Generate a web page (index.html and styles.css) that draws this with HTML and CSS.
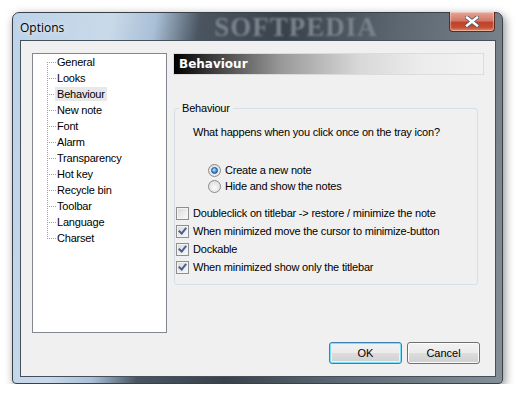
FILE: index.html
```html
<!DOCTYPE html>
<html lang="en">
<head>
    <meta charset="UTF-8">
    <title>Options</title>
    <link rel="stylesheet" href="styles.css">
</head>
<body>
    <div class="window">
        <div class="titlebar">
            <span class="title">Options</span>
            <span class="watermark">SOFTPEDIA</span>
            <button class="close">
                <svg width="14" height="11" viewBox="0 0 14 11">
                    <path d="M2 1.5 L12 9.5 M12 1.5 L2 9.5" stroke="#505a66" stroke-width="4" stroke-linecap="square"/>
                    <path d="M2 1.5 L12 9.5 M12 1.5 L2 9.5" stroke="#fff" stroke-width="2.4" stroke-linecap="square"/>
                </svg>
            </button>
        </div>
        <div class="client">
            <div class="main">
                <ul class="tree">
                    <li class="first">General</li>
                    <li>Looks</li>
                    <li><span class="selected">Behaviour</span></li>
                    <li>New note</li>
                    <li>Font</li>
                    <li>Alarm</li>
                    <li>Transparency</li>
                    <li>Hot key</li>
                    <li>Recycle bin</li>
                    <li>Toolbar</li>
                    <li>Language</li>
                    <li class="last">Charset</li>
                </ul>
                <div class="page">
                    <div class="page-header">Behaviour</div>
                    <fieldset class="group">
                        <legend>Behaviour</legend>
                        <p class="question">What happens when you click once on the tray icon?</p>
                        <div class="radios">
                            <label class="option"><span class="radio checked"></span>Create a new note</label>
                            <label class="option"><span class="radio"></span>Hide and show the notes</label>
                        </div>
                        <div class="checks">
                            <label class="option"><span class="check"></span>Doubleclick on titlebar -&gt; restore / minimize the note</label>
                            <label class="option"><span class="check checked"></span>When minimized move the cursor to minimize-button</label>
                            <label class="option"><span class="check checked"></span>Dockable</label>
                            <label class="option"><span class="check checked"></span>When minimized show only the titlebar</label>
                        </div>
                    </fieldset>
                </div>
            </div>
            <div class="buttons">
                <button class="btn default">OK</button>
                <button class="btn">Cancel</button>
            </div>
        </div>
    </div>
</body>
</html>
```

FILE: styles.css
```css
body {
    margin: 0;
    background-color: #fff;
    font-family: "Liberation Sans", Arial, sans-serif;
    font-size: 11px;
    letter-spacing: -0.2px;
    color: #000;
}
.window {
    margin: 12px 0 0 12px;
    width: 491px;
    height: 372px;
    box-sizing: border-box;
    padding: 0 6px 6px 7px;
    border-radius: 7px 7px 4px 4px;
    border: 1px solid #3a4047;
    background:
        linear-gradient(100deg, #bcd3ea 0%, #c9d9e8 18%, #a8bfd6 26%, #4a5560 34%, #39424b 50%, #5c6771 70%, #848f98 100%);
    box-shadow: 2px 3px 10px rgba(0,0,0,0.45);
    display: flex;
    flex-direction: column;
}
.titlebar {
    height: 27px;
    display: flex;
    align-items: center;
    letter-spacing: 0;
}
.title {
    font-family: "Open Sans", "Liberation Sans", sans-serif;
    font-size: 12px;
    padding-left: 0;
    padding-top: 1px;
    color: #000;
    text-shadow: 0 0 6px rgba(255,255,255,0.9);
}
.watermark {
    margin-left: 150px;
    margin-top: 2px;
    font-family: "Liberation Serif", serif;
    font-weight: bold;
    font-size: 27px;
    letter-spacing: 1px;
    color: #7a838c;
    filter: blur(1.2px);
}
.close {
    margin-left: auto;
    align-self: flex-start;
    width: 46px;
    height: 20px;
    margin-top: -1px;
    margin-right: 1px;
    border: 1px solid #5b2a24;
    border-top: none;
    border-radius: 0 0 4px 4px;
    background: linear-gradient(to bottom, #e6a595 0%, #d47867 45%, #c0432c 55%, #c44c32 80%, #e08866 100%);
    box-shadow: inset 0 0 1px 1px rgba(255,255,255,0.4);
    display: flex;
    align-items: center;
    justify-content: center;
    padding: 0;
}
.client {
    flex: 1;
    background-color: #f0f0f0;
    border: 1px solid #44505b;
    padding: 12px 11px 0 11px;
    display: flex;
    flex-direction: column;
}
.main {
    display: flex;
    gap: 6px;
    height: 280px;
}
.tree {
    list-style: none;
    margin: 0;
    padding: 0;
    width: 135px;
    box-sizing: border-box;
    background-color: #fff;
    border: 1px solid #828790;
}
.tree li {
    height: 16px;
    line-height: 17px;
    padding-left: 24px;
    background:
        repeating-linear-gradient(to bottom, #a0a0a0 0 1px, transparent 1px 2px) 14px 0 / 1px 16px no-repeat,
        repeating-linear-gradient(to right, #a0a0a0 0 1px, transparent 1px 2px) 16px 8px / 8px 1px no-repeat;
}
.tree li.first {
    background:
        repeating-linear-gradient(to bottom, #a0a0a0 0 1px, transparent 1px 2px) 14px 8px / 1px 8px no-repeat,
        repeating-linear-gradient(to right, #a0a0a0 0 1px, transparent 1px 2px) 16px 8px / 8px 1px no-repeat;
}
.tree li.last {
    background:
        repeating-linear-gradient(to bottom, #a0a0a0 0 1px, transparent 1px 2px) 14px 0 / 1px 9px no-repeat,
        repeating-linear-gradient(to right, #a0a0a0 0 1px, transparent 1px 2px) 16px 8px / 8px 1px no-repeat;
}
.tree .selected {
    background-color: #e8e8e8;
    margin-left: -2px;
    padding: 1px 2px;
}
.page {
    flex: 1;
    display: flex;
    flex-direction: column;
}
.page-header {
    height: 22px;
    box-sizing: border-box;
    border: 1px solid #dcdcdc;
    background: linear-gradient(to right, #000 0%, #3a3a3a 12%, #9a9a9a 35%, #d8d8d8 60%, #ececec 80%, #f2f2f2 100%);
    color: #fff;
    font-family: "DejaVu Sans", sans-serif;
    font-weight: bold;
    font-size: 12px;
    letter-spacing: 0;
    line-height: 20px;
    padding-left: 5px;
}
.group {
    margin: 27px 6px 0 1px;
    border: 1px solid #d5dfe5;
    border-radius: 3px;
    padding: 0 0 0 1px;
    height: 183px;
    box-sizing: border-box;
}
.group legend {
    padding: 0 3px;
    margin-left: 3px;
}
.question {
    margin: 12px 0 0 17px;
}
.radios {
    margin: 24px 0 0 32px;
    display: flex;
    flex-direction: column;
}
.radios .option {
    height: 16px;
}
.checks {
    margin-top: 10px;
    display: flex;
    flex-direction: column;
}
.checks .option {
    height: 18px;
}
.option {
    display: flex;
    align-items: center;
    gap: 4px;
}
.radio {
    width: 11px;
    height: 11px;
    border: 1px solid #8a8a8a;
    border-radius: 50%;
    background: radial-gradient(circle at 50% 60%, #fafafa 0%, #e2e2e2 70%, #cfcfcf 100%);
    display: flex;
    align-items: center;
    justify-content: center;
}
.radio.checked::after {
    content: "";
    width: 5px;
    height: 5px;
    border-radius: 50%;
    border: 1px solid #1b4f87;
    background: radial-gradient(circle at 40% 35%, #bfe4ff 0%, #4a9be0 50%, #1a5ea8 100%);
}
.check {
    width: 11px;
    height: 11px;
    border: 1px solid #8e8f8f;
    background: linear-gradient(135deg, #d8d8d8 0%, #f4f4f4 80%, #fff 100%);
    box-shadow: inset 0 0 0 1px #f4f4f4;
    display: flex;
    align-items: center;
    justify-content: center;
}
.check.checked::after {
    content: "";
    width: 3px;
    height: 6px;
    margin-top: -2px;
    border-right: 2px solid #4a5f97;
    border-bottom: 2px solid #4a5f97;
    transform: rotate(40deg);
}
.buttons {
    display: flex;
    justify-content: flex-end;
    gap: 5px;
    margin-top: 9px;
    padding-right: 4px;
}
.btn {
    width: 73px;
    height: 22px;
    border: 1px solid #707070;
    border-radius: 3px;
    background: linear-gradient(to bottom, #f2f2f2 0%, #ebebeb 50%, #dddddd 51%, #cfcfcf 100%);
    box-shadow: inset 0 0 0 1px #fcfcfc;
    font-family: "Liberation Sans", Arial, sans-serif;
    font-size: 11px;
    color: #000;
    padding: 0;
}
.btn.default {
    border-color: #3c7fb1;
    box-shadow: inset 0 0 0 1px #7de0f9, inset 0 0 0 2px #e8f4fb;
}
```
